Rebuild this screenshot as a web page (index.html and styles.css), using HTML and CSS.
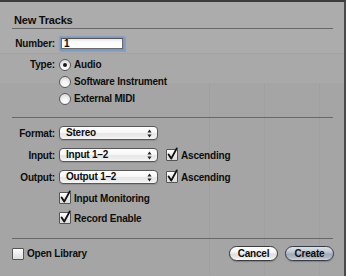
FILE: index.html
```html
<!DOCTYPE html>
<html>
<head>
<meta charset="utf-8">
<title>New Tracks</title>
<link rel="stylesheet" href="styles.css">
</head>
<body>
<div class="window">
  <div class="sheet">
    <div class="title">New Tracks</div>
    <div class="rule"></div>

    <div class="row row-number">
      <span class="label">Number:</span>
      <span class="textfield">1</span>
    </div>

    <div class="radio-group">
      <div class="row row-radio">
        <span class="label">Type:</span>
        <span class="radio on"></span><span class="text">Audio</span>
      </div>
      <div class="row row-radio">
        <span class="label"></span>
        <span class="radio"></span><span class="text">Software Instrument</span>
      </div>
      <div class="row row-radio">
        <span class="label"></span>
        <span class="radio"></span><span class="text">External MIDI</span>
      </div>
    </div>

    <div class="rule rule-mid"></div>

    <div class="popup-group">
      <div class="row row-popup">
        <span class="label">Format:</span>
        <span class="popup"><span class="popup-text">Stereo</span><svg class="arrows" width="5" height="9" viewBox="0 0 5 9"><path d="M2.5 0.5 L4.6 3.4 L0.4 3.4 Z M2.5 8.5 L4.6 5.6 L0.4 5.6 Z" fill="#222"/></svg></span>
      </div>
      <div class="row row-popup">
        <span class="label">Input:</span>
        <span class="popup"><span class="popup-text">Input 1–2</span><svg class="arrows" width="5" height="9" viewBox="0 0 5 9"><path d="M2.5 0.5 L4.6 3.4 L0.4 3.4 Z M2.5 8.5 L4.6 5.6 L0.4 5.6 Z" fill="#222"/></svg></span>
        <span class="checkbox checked after-popup"><svg width="12" height="12" viewBox="0 0 12 12"><path d="M2.6 5.6 L5.2 9.6 L10.8 -0.6" fill="none" stroke="#111" stroke-width="1.9" stroke-linecap="round" stroke-linejoin="round"/></svg></span><span class="text">Ascending</span>
      </div>
      <div class="row row-popup">
        <span class="label">Output:</span>
        <span class="popup"><span class="popup-text">Output 1–2</span><svg class="arrows" width="5" height="9" viewBox="0 0 5 9"><path d="M2.5 0.5 L4.6 3.4 L0.4 3.4 Z M2.5 8.5 L4.6 5.6 L0.4 5.6 Z" fill="#222"/></svg></span>
        <span class="checkbox checked after-popup"><svg width="12" height="12" viewBox="0 0 12 12"><path d="M2.6 5.6 L5.2 9.6 L10.8 -0.6" fill="none" stroke="#111" stroke-width="1.9" stroke-linecap="round" stroke-linejoin="round"/></svg></span><span class="text">Ascending</span>
      </div>
      <div class="row row-check">
        <span class="label"></span>
        <span class="checkbox checked"><svg width="12" height="12" viewBox="0 0 12 12"><path d="M2.6 5.6 L5.2 9.6 L10.8 -0.6" fill="none" stroke="#111" stroke-width="1.9" stroke-linecap="round" stroke-linejoin="round"/></svg></span><span class="text">Input Monitoring</span>
      </div>
      <div class="row row-check">
        <span class="label"></span>
        <span class="checkbox checked"><svg width="12" height="12" viewBox="0 0 12 12"><path d="M2.6 5.6 L5.2 9.6 L10.8 -0.6" fill="none" stroke="#111" stroke-width="1.9" stroke-linecap="round" stroke-linejoin="round"/></svg></span><span class="text">Record Enable</span>
      </div>
    </div>

    <div class="rule rule-bottom"></div>

    <div class="footer">
      <div class="footer-left">
        <span class="checkbox"></span><span class="text">Open Library</span>
      </div>
      <div class="buttons">
        <span class="button">Cancel</span>
        <span class="button default">Create</span>
      </div>
    </div>
  </div>
</div>
</body>
</html>
```

FILE: styles.css
```css
* { box-sizing: border-box; }

html, body {
  margin: 0;
  padding: 0;
  width: 346px;
  height: 276px;
  overflow: hidden;
  background: #a8a8a8;
}

.window {
  width: 346px;
  height: 276px;
  border-top: 2px solid #3c3c3c;
  border-right: 2px solid #4a4a4a;
  font-family: "Liberation Sans", Arial, sans-serif;
  font-weight: bold;
  font-size: 10px;
  letter-spacing: -0.2px;
  color: #0d0d0d;
  background:
    linear-gradient(to right, transparent 209px, #a0a0a0 209px 210px, transparent 210px 264px, #a0a0a0 264px 265px, transparent 265px 319px, #a0a0a0 319px 320px, transparent 320px) 0 81px / 100% 200px no-repeat,
    linear-gradient(to bottom, #acacac 0 51px, #a3a3a3 51px 52px, #a9a9a9 52px 81px, #a5a5a5 81px);
}

.sheet {
  padding: 0 11px 0 12px;
}

.title {
  padding: 11px 0 0 2px;
  line-height: 15px;
  font-size: 11px;
}

.rule {
  height: 1px;
  background: #686868;
}

.row {
  display: flex;
  align-items: center;
  white-space: nowrap;
}

.label {
  flex: 0 0 43px;
  text-align: right;
  margin-right: 4px;
}

.row-number {
  margin-top: 5px;
  height: 19px;
}

.textfield {
  margin-left: 2px;
  width: 62px;
  height: 11px;
  border: 1px solid #6a6a6a;
  border-top-color: #555;
  background: linear-gradient(#e9e9e9, #fbfbfb 3px, #fff);
  box-shadow: 0 0 0 1.5px #7598cb, 0 0 1px 2.5px rgba(110, 145, 200, 0.5);
  line-height: 9px;
  padding-left: 2px;
}

.radio-group {
  margin-top: 3px;
}

.row-radio {
  height: 17px;
}

.radio {
  flex: 0 0 12px;
  width: 12px;
  height: 12px;
  border-radius: 50%;
  border: 1px solid #5a5a5a;
  background: radial-gradient(circle at 50% 75%, #ffffff 0%, #f3f3f3 40%, #cfcfcf 100%);
  margin-right: 3px;
  position: relative;
}

.radio.on::after {
  content: "";
  position: absolute;
  left: 3px;
  top: 3px;
  width: 4px;
  height: 4px;
  border-radius: 50%;
  background: #1a1a1a;
}

.rule-mid {
  margin-top: 10px;
}

.popup-group {
  margin-top: 4px;
}

.row-popup {
  height: 22px;
}

.popup {
  width: 99px;
  height: 14px;
  border: 1px solid #575757;
  border-radius: 4px;
  background: linear-gradient(#ffffff 0%, #f7f7f7 45%, #e6e6e6 55%, #eeeeee 85%, #f8f8f8 100%);
  box-shadow: 0 1px 1px rgba(0,0,0,0.12);
  display: flex;
  align-items: center;
  justify-content: space-between;
  padding: 0 5px 0 6px;
}

.popup-text {
  line-height: 12px;
}

.arrows {
  display: block;
}

.checkbox {
  flex: 0 0 12px;
  width: 12px;
  height: 12px;
  border: 1px solid #555;
  border-radius: 1px;
  background: linear-gradient(#fdfdfd, #ececec 50%, #dcdcdc 100%);
  margin-right: 3px;
  position: relative;
}

.checkbox svg {
  position: absolute;
  left: -1px;
  top: -1px;
  overflow: visible;
}

.after-popup {
  margin-left: 8px;
}

.row-check {
  height: 20px;
}

.rule-bottom {
  margin-top: 10px;
}

.footer {
  margin-top: 6px;
  height: 17px;
  display: flex;
  align-items: center;
  justify-content: space-between;
}

.footer-left {
  display: flex;
  align-items: center;
}

.buttons {
  display: flex;
  gap: 7px;
  margin-right: -1px;
}

.button {
  width: 49px;
  height: 15px;
  border: 1px solid #3a3a3a;
  border-radius: 8px;
  background: linear-gradient(#ffffff 0%, #f6f6f6 40%, #dedede 55%, #e9e9e9 80%, #fbfbfb 100%);
  box-shadow: 0 1px 1px rgba(0,0,0,0.2);
  text-align: center;
  line-height: 13px;
}

.button.default {
  border-color: #363c46;
  background: linear-gradient(#dde2e8 0%, #bfc6d0 40%, #a1aab7 55%, #b0b8c4 80%, #d2d8df 100%);
}
```
